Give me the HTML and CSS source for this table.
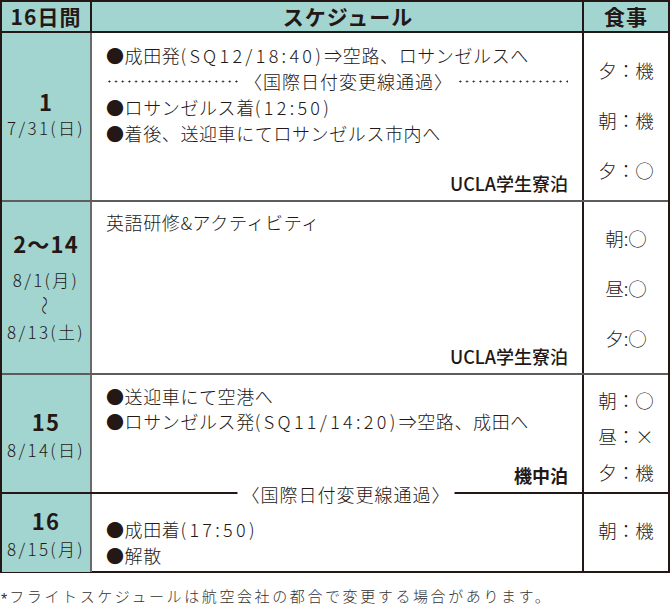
FILE: index.html
```html
<!DOCTYPE html>
<html lang="ja">
<head>
<meta charset="utf-8">
<title>日程表</title>
<link rel="stylesheet" href="styles.css">
</head>
<body>
<div class="tbl">
  <div class="row head">
    <div class="c1 head-days">16日間</div>
    <div class="c2 head-title">スケジュール</div>
    <div class="c3">食事</div>
  </div>

  <div class="row r1">
    <div class="c1 days">
      <div class="day">1</div>
      <div class="date">7/31(日)</div>
    </div>
    <div class="c2 plan">
      <p class="line">●成田発<span class="num">(SQ12/18:40)</span>⇒空路、ロサンゼルスへ</p>
      <p class="line dateline"><span class="dots dots-l"></span><span class="intl-text">〈国際日付変更線通過〉</span><span class="dots"></span></p>
      <p class="line">●ロサンゼルス着<span class="num">(12:50)</span></p>
      <p class="line">●着後、送迎車にてロサンゼルス市内へ</p>
      <p class="stay">UCLA学生寮泊</p>
    </div>
    <div class="c3 meals wide">
      <p>夕：機</p>
      <p>朝：機</p>
      <p>夕：○</p>
    </div>
  </div>

  <div class="row r2">
    <div class="c1 days">
      <div class="day">2〜14</div>
      <div class="date first">8/1(月)</div>
      <div class="date wave"><span class="wave-glyph">〜</span></div>
      <div class="date">8/13(土)</div>
    </div>
    <div class="c2 plan">
      <p class="line">英語研修&amp;アクティビティ</p>
      <p class="stay">UCLA学生寮泊</p>
    </div>
    <div class="c3 meals wide compact">
      <p>朝:○</p>
      <p>昼:○</p>
      <p>夕:○</p>
    </div>
  </div>

  <div class="row r3">
    <div class="c1 days">
      <div class="day">15</div>
      <div class="date">8/14(日)</div>
    </div>
    <div class="c2 plan">
      <p class="line">●送迎車にて空港へ</p>
      <p class="line tight">●ロサンゼルス発<span class="num">(SQ11/14:20)</span>⇒空路、成田へ</p>
      <p class="stay bold">機中泊</p>
      <span class="intl-label">〈国際日付変更線通過〉</span>
    </div>
    <div class="c3 meals narrow">
      <p>朝：○</p>
      <p>昼：×</p>
      <p>夕：機</p>
    </div>
  </div>

  <div class="row r4">
    <div class="c1 days">
      <div class="day">16</div>
      <div class="date">8/15(月)</div>
    </div>
    <div class="c2 plan">
      <p class="line">●成田着<span class="num">(17:50)</span></p>
      <p class="line">●解散</p>
    </div>
    <div class="c3 meals narrow">
      <p>朝：機</p>
    </div>
  </div>
</div>
<p class="note"><span class="star">*</span>フライトスケジュールは航空会社の都合で変更する場合があります。</p>
</body>
</html>
```

FILE: styles.css
```css
* {
  box-sizing: border-box;
  margin: 0;
  padding: 0;
}

body {
  margin: 0;
  background: #ffffff;
  color: #231815;
  font-family: "Noto Sans CJK JP", "Noto Sans", sans-serif;
}

.tbl {
  width: 670px;
  border: 2px solid #231815;
}

.row {
  display: grid;
  grid-template-columns: 90px 492px 1fr;
  border-bottom: 2px solid #5e5c5c;
}

.row > .c1 {
  background: #a3d5d0;
  border-right: 2px solid #6b6a6a;
}

.row > .c2 {
  border-right: 2px solid #231815;
}

/* header */
.head {
  height: 31px;
  background: #a3d5d0;
  border-bottom-color: #231815;
}

.head > div {
  font-size: 21px;
  font-weight: 700;
  line-height: 29px;
  text-align: center;
  letter-spacing: 1px;
}

.head > .c1 {
  border-right-color: #231815;
}

.head-days {
  letter-spacing: 2.4px;
}

.head-title {
  padding-left: 22px;
}

/* row heights */
.r1 { height: 169px; }
.r2 { height: 173px; }
.r3 { height: 119px; border-bottom-color: #231815; }
.r4 { height: 77px; border-bottom: 0; }

/* day column */
.days {
  display: flex;
  flex-direction: column;
  align-items: center;
}

.day {
  font-size: 22px;
  font-weight: 700;
  line-height: 28px;
  letter-spacing: 1.2px;
}

.date {
  font-size: 17px;
  font-weight: 300;
  line-height: 26px;
  letter-spacing: 2.3px;
  white-space: nowrap;
}

.r1 .days { padding-top: 54px; }
.r2 .days { padding-top: 27px; }
.r3 .days { padding-top: 32px; }
.r4 .days { padding-top: 12px; }

.r3 .date,
.r4 .date { margin-top: 2px; }

.r2 .date.first { margin-top: 10px; }

.wave {
  line-height: 25px;
  letter-spacing: 0;
}

.wave-glyph {
  display: inline-block;
  transform: rotate(90deg) scaleY(0.8);
  font-size: 19px;
  font-weight: 300;
}

/* schedule column */
.plan {
  position: relative;
  display: flex;
  flex-direction: column;
  padding: 9px 14px 4px 14px;
}

.r2 .plan { padding-top: 7px; }
.r3 .plan { padding-top: 8px; }
.r4 .plan { padding-top: 22px; }

.line {
  font-size: 18px;
  font-weight: 300;
  line-height: 26px;
  letter-spacing: 0.6px;
  white-space: nowrap;
}

.num {
  letter-spacing: 3.3px;
}

.line.tight {
  line-height: 25px;
}

.dateline {
  display: flex;
  align-items: center;
  gap: 4px;
}

.dots {
  flex: 1;
  height: 3px;
  background-image: radial-gradient(circle, #231815 0.8px, transparent 1.2px);
  background-size: 6.7px 3px;
  background-repeat: repeat-x;
}

.dots-l {
  flex: 0 0 134px;
}

.intl-text {
  letter-spacing: 1px;
}

.stay {
  margin-top: auto;
  text-align: right;
  font-size: 18px;
  font-weight: 500;
  line-height: 26px;
}

.stay.bold {
  font-weight: 700;
}

.intl-label {
  position: absolute;
  bottom: -13px;
  left: calc(50% + 9px);
  transform: translateX(-50%);
  z-index: 1;
  padding: 0 4px;
  background: #ffffff;
  font-size: 18px;
  font-weight: 300;
  line-height: 22px;
  letter-spacing: 1px;
  white-space: nowrap;
}

/* meals column */
.meals {
  text-align: center;
  font-size: 18.5px;
  font-weight: 300;
  white-space: nowrap;
}

.meals.wide { padding-top: 12px; }
.meals.wide p { line-height: 50px; }
.r2 .meals.wide { padding-top: 11px; }

.meals.narrow { padding-top: 7px; }
.meals.narrow p { line-height: 36px; }
.r4 .meals.narrow { padding-top: 18px; }

/* footnote */
.note {
  margin-top: 12px;
  padding-left: 1px;
  font-size: 15px;
  font-weight: 300;
  line-height: 22px;
  letter-spacing: 2.6px;
  color: #333333;
  white-space: nowrap;
}

.star {
  display: inline-block;
  font-family: "Liberation Sans", sans-serif;
  font-size: 16px;
  font-weight: 400;
  letter-spacing: 2px;
  transform: translateY(3px);
}
```
